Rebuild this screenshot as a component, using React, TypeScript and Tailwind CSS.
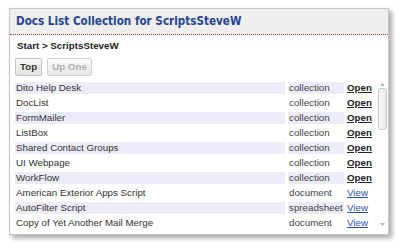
import React from 'react'

type Row = { name: string; kind: string; action: 'Open' | 'View' }

const rows: Row[] = [
  { name: 'Dito Help Desk', kind: 'collection', action: 'Open' },
  { name: 'DocList', kind: 'collection', action: 'Open' },
  { name: 'FormMailer', kind: 'collection', action: 'Open' },
  { name: 'ListBox', kind: 'collection', action: 'Open' },
  { name: 'Shared Contact Groups', kind: 'collection', action: 'Open' },
  { name: 'UI Webpage', kind: 'collection', action: 'Open' },
  { name: 'WorkFlow', kind: 'collection', action: 'Open' },
  { name: 'American Exterior Apps Script', kind: 'document', action: 'View' },
  { name: 'AutoFilter Script', kind: 'spreadsheet', action: 'View' },
  { name: 'Copy of Yet Another Mail Merge', kind: 'document', action: 'View' },
]

const Scrollbar = () => (
  <div className='flex w-[12px] flex-col items-center bg-white pt-[1px]'>
    <svg width='7' height='5' viewBox='0 0 7 5' className='mt-[2px]'>
      <path d='M3.5 1 L6 4 L1 4 Z' fill='#b5b5b5' />
    </svg>
    <div className='mt-[1px] h-[42px] w-[9px] rounded-[3px] border border-[#c4c4c4] bg-gradient-to-r from-[#f7f7f7] to-[#e9e9e9]' />
    <div className='flex-1' />
    <svg width='7' height='5' viewBox='0 0 7 5' className='mb-[6px]'>
      <path d='M1 1 L6 1 L3.5 4 Z' fill='#b5b5b5' />
    </svg>
  </div>
)

const App = () => {
  return (
    <div className='h-[248px] w-[400px] bg-white pl-[9px] pt-[8px] font-["Liberation_Sans",Arial,sans-serif]'>
      <div className='flex h-[227px] w-[380px] flex-col border border-[#c6c6c6] bg-white shadow-[3px_3px_5px_rgba(0,0,0,0.35)]'>
        <div className='flex h-[26px] items-center border-b border-dotted border-[#c0392b] bg-[#eeeeee] pl-[6px] pt-[1px]'>
          <h1 className='font-["DejaVu_Sans_Condensed","DejaVu_Sans",sans-serif] text-[11.6px] font-bold text-[#27448f]'>
            Docs List Collection for ScriptsSteveW
          </h1>
        </div>

        <div className='flex h-[22px] items-center pl-[7px] text-[9.75px] font-bold text-[#222]'>
          Start &gt; ScriptsSteveW
        </div>

        <div className='mt-[1px] flex h-[18px] gap-x-[5px] pl-[5px]'>
          <button className='rounded-[2px] border border-[#c2c2c2] bg-gradient-to-b from-[#fbfbfb] to-[#e2e2e2] px-[4px] text-[9.75px] font-bold text-[#333]'>
            Top
          </button>
          <button className='rounded-[2px] border border-[#d2d2d2] bg-gradient-to-b from-[#fbfbfb] to-[#e6e6e6] px-[4px] text-[9.75px] font-bold text-[#b0b0b0]'>
            Up One
          </button>
        </div>

        <div className='mt-[3px] flex h-[154px] pl-[2px]'>
          <div className='flex-1 overflow-hidden'>
            <table className='w-[364px] table-fixed border-separate border-spacing-[3px] text-[9.75px] leading-[12px]'>
              <colgroup>
                <col className='w-[270px]' />
                <col className='w-[56px]' />
                <col className='w-[26px]' />
              </colgroup>
              <tbody>
                {rows.map((r, i) => {
                  const shade = i % 2 === 0 ? 'bg-[#ececf9]' : 'bg-white'
                  return (
                    <tr key={r.name} className='h-[12px]'>
                      <td className={`${shade} whitespace-nowrap p-0 pl-[1px] text-[#333]`}>{r.name}</td>
                      <td className={`${shade} whitespace-nowrap p-0 pl-[1px] text-[#444]`}>{r.kind}</td>
                      <td className='whitespace-nowrap p-0'>
                        {r.action === 'Open' ? (
                          <a className='font-bold text-[#222] underline'>Open</a>
                        ) : (
                          <a className='text-[#2b52a8] underline'>View</a>
                        )}
                      </td>
                    </tr>
                  )
                })}
              </tbody>
            </table>
          </div>
          <Scrollbar />
        </div>
      </div>
    </div>
  )
}

export default App
